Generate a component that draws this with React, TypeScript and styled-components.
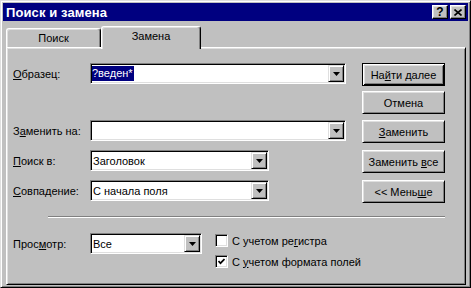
import React from 'react';
import styled, { createGlobalStyle } from 'styled-components';

const Global = createGlobalStyle`
  html, body { margin: 0; padding: 0; background: #c0c0c0; }
  body { font-family: "Liberation Sans", Arial, sans-serif; font-size: 11px; color: #000; }
  * { box-sizing: border-box; }
  u { text-underline-offset: 1px; }
`;

const Window = styled.div`
  width: 471px;
  height: 288px;
  background: #c0c0c0;
  border: 1px solid;
  border-color: #dfdfdf #000 #000 #dfdfdf;
  box-shadow: inset 1px 1px #fff, inset -1px -1px #808080;
  padding: 2px;
  display: flex;
  flex-direction: column;
`;

const TitleBar = styled.div`
  flex: none;
  height: 18px;
  background: #000080;
  display: flex;
  align-items: center;
  justify-content: space-between;
  padding: 0 2px 0 3px;
`;

const Title = styled.span`
  color: #fff;
  font-weight: bold;
  font-size: 13px;
  letter-spacing: 0.1px;
`;

const TitleButtons = styled.div`
  display: flex;
  gap: 2px;
`;

const TitleButton = styled.div`
  width: 16px;
  height: 14px;
  background: #c0c0c0;
  border: 1px solid;
  border-color: #fff #000 #000 #fff;
  box-shadow: inset -1px -1px #808080, inset 1px 1px #dfdfdf;
  display: flex;
  align-items: center;
  justify-content: center;
  font-weight: bold;
  font-size: 12px;
  line-height: 12px;
`;

const Body = styled.div`
  flex: 1;
  display: flex;
  flex-direction: column;
  padding: 5px 2px 0 3px;
`;

const TabRow = styled.div`
  flex: none;
  height: 21px;
  display: flex;
  align-items: flex-end;
`;

const Tab = styled.div<{ $active?: boolean; $w: number }>`
  width: ${(p) => p.$w}px;
  height: ${(p) => (p.$active ? 23 : 19)}px;
  margin-bottom: ${(p) => (p.$active ? -2 : 0)}px;
  position: relative;
  z-index: ${(p) => (p.$active ? 1 : 0)};
  background: #c0c0c0;
  border-top: 1px solid #fff;
  border-left: 1px solid #fff;
  border-right: 1px solid #000;
  border-radius: 3px 3px 0 0;
  box-shadow: inset -1px 0 #808080, inset 1px 1px #dfdfdf;
  display: flex;
  justify-content: center;
  padding-top: 3px;
  font-size: 11px;
`;

const Panel = styled.div`
  flex: 1;
  border: 1px solid;
  border-color: #fff #000 #000 #fff;
  box-shadow: inset 1px 1px #dfdfdf, inset -1px -1px #808080;
  padding: 15px 0 0 6px;
  display: flex;
  flex-direction: column;
`;

const FormGrid = styled.div`
  display: grid;
  grid-template-columns: 77px 272px 83px;
  grid-template-rows: 28px 29px 30px 30px 23px;
  align-items: start;
`;

const Label = styled.div`
  height: 21px;
  display: flex;
  align-items: center;
  white-space: pre;
`;

const Combo = styled.div<{ $w: number }>`
  width: ${(p) => p.$w}px;
  height: 21px;
  background: #fff;
  border: 1px solid;
  border-color: #808080 #fff #fff #808080;
  box-shadow: inset 1px 1px #000, inset -1px -1px #dfdfdf;
  padding: 1px;
  display: flex;
  align-items: center;
`;

const ComboText = styled.div`
  flex: 1;
  padding-left: 1px;
  white-space: pre;
  overflow: hidden;
  display: flex;
  align-items: center;
`;

const Selected = styled.span`
  background: #000080;
  color: #fff;
  line-height: 15px;
  padding: 0 1px 0 0;
  margin-left: -1px;
`;

const ArrowButton = styled.div`
  width: 16px;
  height: 17px;
  flex: none;
  background: #c0c0c0;
  border: 1px solid;
  border-color: #dfdfdf #000 #000 #dfdfdf;
  box-shadow: inset 1px 1px #fff, inset -1px -1px #808080;
  display: flex;
  align-items: center;
  justify-content: center;
`;

const Button = styled.div<{ $default?: boolean }>`
  width: 83px;
  height: 23px;
  background: #c0c0c0;
  border: 1px solid;
  border-color: ${(p) => (p.$default ? '#000' : '#fff #000 #000 #fff')};
  box-shadow: ${(p) =>
    p.$default
      ? 'inset 1px 1px #fff, inset -1px -1px #000, inset 2px 2px #dfdfdf, inset -2px -2px #808080'
      : 'inset 1px 1px #dfdfdf, inset -1px -1px #808080'};
  display: flex;
  align-items: center;
  justify-content: center;
  white-space: pre;
  font-size: 11px;
`;

const Empty = styled.div``;

const Separator = styled.div`
  margin: 13px 0 0 35px;
  width: 397px;
  height: 2px;
  border-top: 1px solid #808080;
  border-bottom: 1px solid #fff;
`;

const BottomRow = styled.div`
  margin-top: 15px;
  display: flex;
  align-items: flex-start;
`;

const LabelCell = styled.div`
  width: 77px;
  flex: none;
`;

const Checks = styled.div`
  margin: 1px 0 0 13px;
  display: flex;
  flex-direction: column;
  gap: 8px;
`;

const CheckRow = styled.div`
  height: 13px;
  display: flex;
  align-items: center;
  gap: 4px;
  white-space: pre;
`;

const Box = styled.span`
  width: 13px;
  height: 13px;
  flex: none;
  background: #fff;
  border: 1px solid;
  border-color: #808080 #fff #fff #808080;
  box-shadow: inset 1px 1px #000, inset -1px -1px #dfdfdf;
  display: flex;
  align-items: center;
  justify-content: center;
`;

const DownArrow = () => (
  <svg width="7" height="4" viewBox="0 0 7 4">
    <polygon points="0,0 7,0 3.5,4" fill="#000" />
  </svg>
);

const CloseIcon = () => (
  <svg width="8" height="7" viewBox="0 0 8 7">
    <path d="M0.5 0.5 L7.5 6.5 M7.5 0.5 L0.5 6.5" stroke="#000" strokeWidth="1.6" />
  </svg>
);

const CheckMark = () => (
  <svg width="7" height="7" viewBox="0 0 7 7">
    <path d="M0.5 3 L2.5 5.2 L6.5 1" stroke="#000" strokeWidth="1.7" fill="none" />
  </svg>
);

const ComboBox: React.FC<{ w: number; children?: React.ReactNode }> = ({ w, children }) => (
  <Combo $w={w}>
    <ComboText>{children}</ComboText>
    <ArrowButton>
      <DownArrow />
    </ArrowButton>
  </Combo>
);

export default function App() {
  return (
    <>
      <Global />
      <Window>
        <TitleBar>
          <Title>Поиск и замена</Title>
          <TitleButtons>
            <TitleButton>?</TitleButton>
            <TitleButton>
              <CloseIcon />
            </TitleButton>
          </TitleButtons>
        </TitleBar>
        <Body>
          <TabRow>
            <Tab $w={95}>Поиск</Tab>
            <Tab $w={100} $active>
              Замена
            </Tab>
          </TabRow>
          <Panel>
            <FormGrid>
              <Label>
                <u>О</u>бразец:
              </Label>
              <ComboBox w={256}>
                <Selected>?веден*</Selected>
              </ComboBox>
              <Button $default>
                На<u>й</u>ти{' '}далее
              </Button>

              <Empty />
              <Empty />
              <Button>Отмена</Button>

              <Label>
                З<u>а</u>менить{' '}на:
              </Label>
              <ComboBox w={256} />
              <Button>
                <u>З</u>аменить
              </Button>

              <Label>
                <u>П</u>оиск{' '}в:
              </Label>
              <ComboBox w={179}>Заголовок</ComboBox>
              <Button>
                {'Заменить '}
                <u>в</u>се
              </Button>

              <Label>
                <u>С</u>овпадение:
              </Label>
              <ComboBox w={179}>С начала поля</ComboBox>
              <Button>
                {'<< Мень'}
                <u>ш</u>е
              </Button>
            </FormGrid>
            <Separator />
            <BottomRow>
              <LabelCell>
                <Label>
                  Прос<u>м</u>отр:
                </Label>
              </LabelCell>
              <ComboBox w={112}>Все</ComboBox>
              <Checks>
                <CheckRow>
                  <Box />
                  <span>
                    {'С учетом ре'}
                    <u>г</u>истра
                  </span>
                </CheckRow>
                <CheckRow>
                  <Box>
                    <CheckMark />
                  </Box>
                  <span>
                    {'С '}
                    <u>у</u>
                    {'четом формата полей'}
                  </span>
                </CheckRow>
              </Checks>
            </BottomRow>
          </Panel>
        </Body>
      </Window>
    </>
  );
}
